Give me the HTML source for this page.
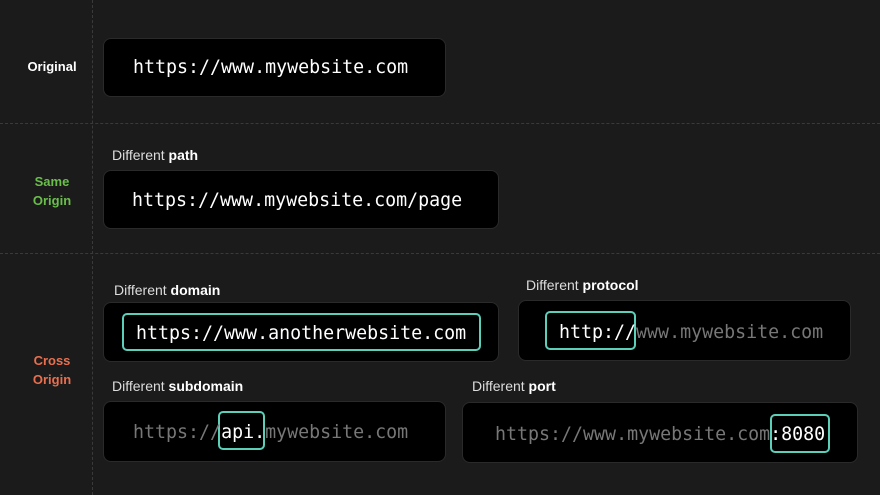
<!DOCTYPE html>
<html><head><style>
*{margin:0;padding:0;box-sizing:border-box}
body{width:880px;height:495px;background:#1b1b1b;position:relative;overflow:hidden;font-family:"Liberation Sans",sans-serif}
.vl{position:absolute;left:92px;top:0;height:495px;border-left:1px dashed #3a3a3a}
.hl{position:absolute;left:0;width:880px;border-top:1px dashed #3a3a3a}
.side{position:absolute;width:104px;left:0;text-align:center;font-weight:bold;font-size:13px;line-height:19px}
.box{position:absolute;background:#000;border:1px solid #2a2a2a;border-radius:8px}
.t{position:absolute;font-family:"DejaVu Sans Mono","Liberation Mono",monospace;font-size:18.3px;color:#fff;white-space:pre;line-height:22px;margin-top:2px}
.g{color:#777}
.hi{position:absolute;border:2px solid #5ccfb9;border-radius:5px}
.lab{position:absolute;font-size:14px;color:#ddd;white-space:nowrap}
.lab b{color:#fff}
</style></head><body>
<div class="vl"></div>
<div class="hl" style="top:123px"></div>
<div class="hl" style="top:253px"></div>

<div class="side" style="top:57px;color:#fff">Original</div>
<div class="side" style="top:172px;color:#6abf4b">Same<br>Origin</div>
<div class="side" style="top:351px;color:#e8704f">Cross<br>Origin</div>

<div class="box" style="left:103px;top:38px;width:343px;height:59px"></div>
<div class="t" style="left:133px;top:55px">https://www.mywebsite.com</div>

<div class="lab" style="left:112px;top:147px">Different <b>path</b></div>
<div class="box" style="left:103px;top:170px;width:396px;height:59px"></div>
<div class="t" style="left:132px;top:188px">https://www.mywebsite.com/page</div>

<div class="lab" style="left:114px;top:282px">Different <b>domain</b></div>
<div class="box" style="left:103px;top:302px;width:396px;height:60px"></div>
<div class="hi" style="left:122px;top:313px;width:359px;height:38px"></div>
<div class="t" style="left:136px;top:321px">https://www.anotherwebsite.com</div>

<div class="lab" style="left:526px;top:277px">Different <b>protocol</b></div>
<div class="box" style="left:518px;top:300px;width:333px;height:61px"></div>
<div class="hi" style="left:545px;top:311px;width:91px;height:39px"></div>
<div class="t" style="left:559px;top:320px">http://<span class="g">www.mywebsite.com</span></div>

<div class="lab" style="left:112px;top:378px">Different <b>subdomain</b></div>
<div class="box" style="left:103px;top:401px;width:343px;height:61px"></div>
<div class="hi" style="left:218px;top:411px;width:47px;height:39px"></div>
<div class="t g" style="left:133px;top:420px">https://<span style="color:#fff">api.</span>mywebsite.com</div>

<div class="lab" style="left:472px;top:378px">Different <b>port</b></div>
<div class="box" style="left:462px;top:402px;width:396px;height:61px"></div>
<div class="hi" style="left:770px;top:414px;width:60px;height:39px"></div>
<div class="t g" style="left:495px;top:422px">https://www.mywebsite.com<span style="color:#fff">:8080</span></div>
</body></html>
